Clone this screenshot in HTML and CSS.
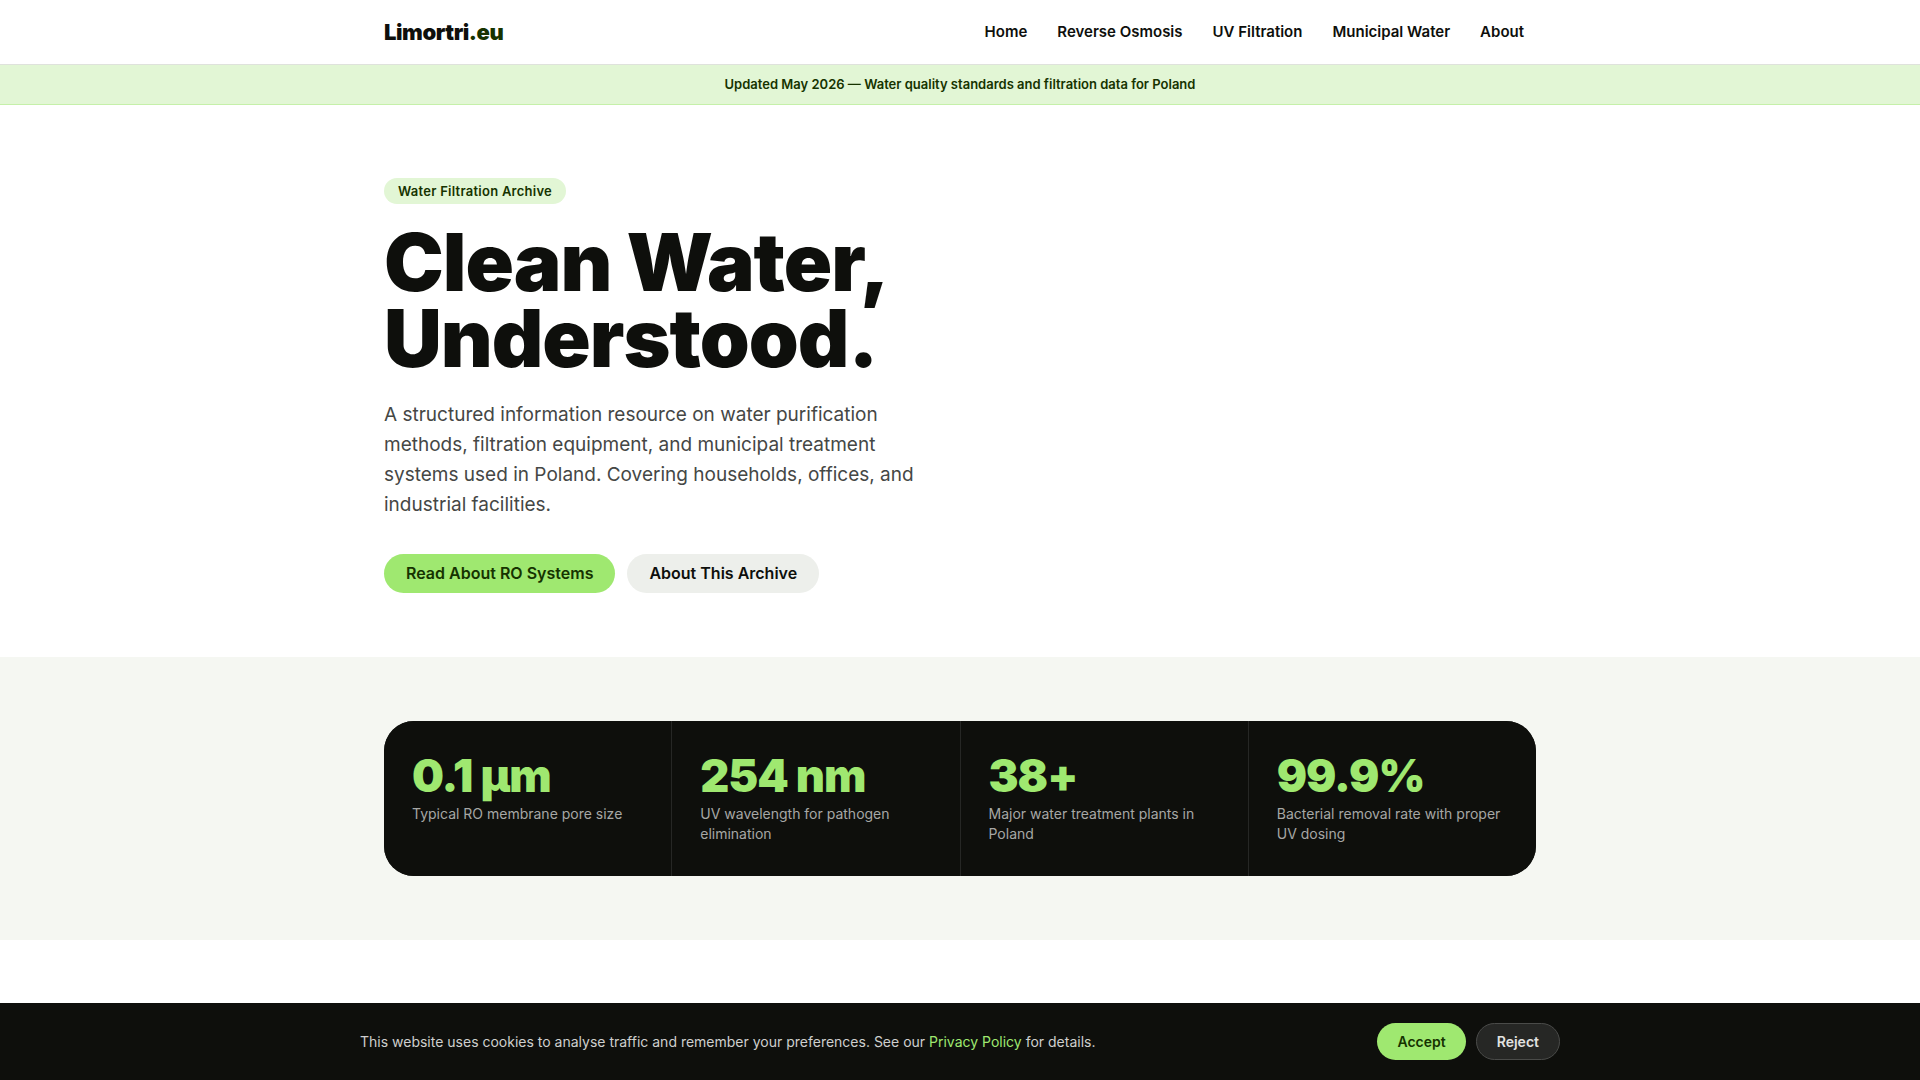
FILE: index.html
```html
<!DOCTYPE html>
<html lang="en">
<head>
    <meta charset="UTF-8">
    <meta name="viewport" content="width=device-width, initial-scale=1.0">
    <title>Limortri.eu - Water Filtration Archive</title>
    <link rel="stylesheet" href="styles.css">
</head>
<body>
<header class="header">
    <div class="container header-inner">
        <a href="/" class="logo">Limortri<span>.eu</span></a>
        <nav class="nav">
            <a href="/">Home</a>
            <a href="/reverse-osmosis.html">Reverse Osmosis</a>
            <a href="/uv-filtration.html">UV Filtration</a>
            <a href="/municipal-water.html">Municipal Water</a>
            <a href="/about.html">About</a>
        </nav>
    </div>
</header>

<div class="notice">Updated May 2026 — Water quality standards and filtration data for Poland</div>

<main>
    <section class="hero">
        <div class="container">
            <div class="hero-content">
                <span class="tag">Water Filtration Archive</span>
                <h1>Clean Water, Understood.</h1>
                <p>A structured information resource on water purification methods, filtration equipment, and municipal treatment systems used in Poland. Covering households, offices, and industrial facilities.</p>
                <div class="hero-actions">
                    <a href="/reverse-osmosis.html" class="btn btn-primary">Read About RO Systems</a>
                    <a href="/about.html" class="btn btn-secondary">About This Archive</a>
                </div>
            </div>
        </div>
    </section>

    <section class="stats-section">
        <div class="container">
            <div class="stats">
                <div class="stat">
                    <div class="stat-value">0.1 µm</div>
                    <div class="stat-label">Typical RO membrane pore size</div>
                </div>
                <div class="stat">
                    <div class="stat-value">254 nm</div>
                    <div class="stat-label">UV wavelength for pathogen elimination</div>
                </div>
                <div class="stat">
                    <div class="stat-value">38+</div>
                    <div class="stat-label">Major water treatment plants in Poland</div>
                </div>
                <div class="stat">
                    <div class="stat-value">99.9%</div>
                    <div class="stat-label">Bacterial removal rate with proper UV dosing</div>
                </div>
            </div>
        </div>
    </section>
</main>

<div class="cookie-bar">
    <div class="cookie-inner">
        <p>This website uses cookies to analyse traffic and remember your preferences. See our <a href="/privacy.html">Privacy Policy</a> for details.</p>
        <div class="cookie-actions">
            <button type="button" class="cookie-btn cookie-accept">Accept</button>
            <button type="button" class="cookie-btn cookie-reject">Reject</button>
        </div>
    </div>
</div>
</body>
</html>
```
FILE: styles.css
```css
* {
    box-sizing: border-box;
    margin: 0;
    padding: 0;
}
body {
    font-family: 'Inter', sans-serif;
    font-size: 16px;
    line-height: 1.5;
    color: #0e0f0c;
    background-color: #fff;
}
a {
    text-decoration: none;
}
.container {
    max-width: 1200px;
    margin: 0 auto;
    padding: 0 24px;
}
.header {
    border-bottom: 1px solid #dfe2dc;
}
.header-inner {
    display: flex;
    align-items: center;
    justify-content: space-between;
    height: 64px;
}
.logo {
    font-size: 22px;
    font-weight: 900;
    letter-spacing: -0.02em;
    color: #0e0f0c;
}
.logo span {
    color: #163300;
}
.nav {
    display: flex;
    gap: 6px;
}
.nav a {
    padding: 8px 12px;
    font-size: 15px;
    font-weight: 600;
    line-height: 24px;
    color: #0e0f0c;
}
.nav a:hover {
    color: #163300;
}
.notice {
    padding: 10px 24px;
    background-color: #e2f6d5;
    border-bottom: 1px solid #c5f0a9;
    color: #163300;
    font-size: 13px;
    font-weight: 600;
    line-height: 19px;
    text-align: center;
}
.hero {
    padding: 73px 0 64px;
}
.hero-content {
    max-width: 552px;
}
.tag {
    display: block;
    width: fit-content;
    padding: 4px 14px;
    border-radius: 999px;
    background-color: #e2f6d5;
    color: #163300;
    font-size: 13px;
    font-weight: 600;
    line-height: 18px;
    letter-spacing: 0.02em;
}
.hero h1 {
    margin: 20px 0 24px;
    font-size: 80px;
    font-weight: 900;
    line-height: 76px;
    letter-spacing: -1px;
}
.hero p {
    margin-bottom: 34px;
    color: #454745;
    font-size: 19px;
    line-height: 30px;
}
.hero-actions {
    display: flex;
    gap: 12px;
}
.btn {
    padding: 8px 22px;
    border-radius: 999px;
    font-size: 16px;
    font-weight: 600;
    line-height: 23px;
}
.btn-primary {
    background-color: #9fe870;
    color: #163300;
}
.btn-secondary {
    background-color: #edefeb;
    color: #0e0f0c;
}
.stats-section {
    padding: 64px 0;
    background-color: #f5f7f2;
}
.stats {
    display: grid;
    grid-template-columns: repeat(4, 1fr);
    gap: 1px;
    overflow: hidden;
    border-radius: 30px;
    background-color: #262725;
}
.stat {
    padding: 32px 28px;
    background-color: #0e0f0c;
}
.stat-value {
    margin-bottom: 6px;
    color: #9fe870;
    font-size: 45px;
    font-weight: 900;
    line-height: 45px;
    letter-spacing: -1px;
}
.stat-label {
    color: #a6a7a5;
    font-size: 14px;
    line-height: 20px;
}
/* Cookie consent stays over the page */
.cookie-bar {
    position: fixed;
    left: 0;
    right: 0;
    bottom: 0;
    padding: 20px 24px;
    background-color: #0e0f0c;
}
.cookie-inner {
    display: flex;
    align-items: center;
    justify-content: space-between;
    gap: 24px;
    max-width: 1200px;
    margin: 0 auto;
}
.cookie-bar p {
    color: #cfcfce;
    font-size: 14px;
}
.cookie-bar p a {
    color: #9fe870;
}
.cookie-actions {
    display: flex;
    gap: 10px;
}
.cookie-btn {
    padding: 8px 20px;
    border: none;
    border-radius: 999px;
    font-family: inherit;
    font-size: 14px;
    font-weight: 600;
    line-height: 19px;
    cursor: pointer;
}
.cookie-accept {
    background-color: #9fe870;
    color: #163300;
}
.cookie-reject {
    border: 1px solid #4a4b49;
    background-color: #262725;
    color: #e2e2e1;
}
```
